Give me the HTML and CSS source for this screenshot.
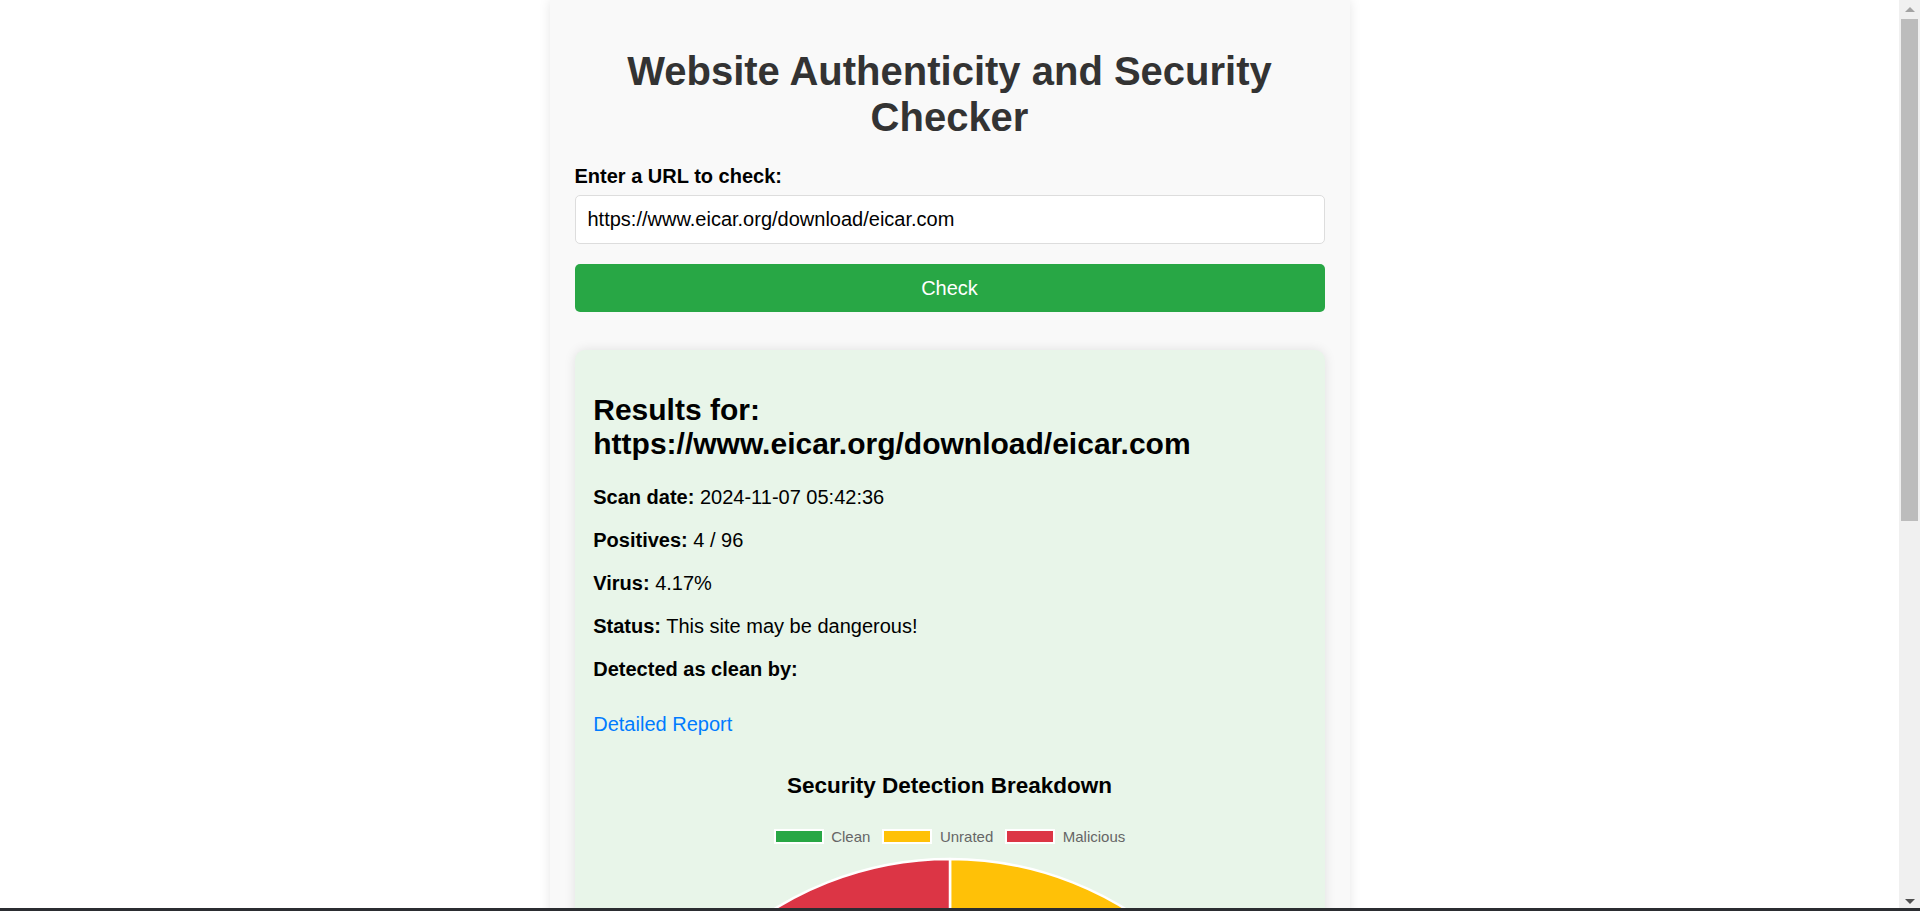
FILE: index.html
```html
<!DOCTYPE html>
<html lang="en">
<head>
<meta charset="utf-8">
<title>Website Authenticity and Security Checker</title>
<link rel="stylesheet" href="styles.css">
</head>
<body>
<div class="container">
  <h1 class="title">Website Authenticity and Security Checker</h1>
  <form class="check-form">
    <label class="field-label" for="url">Enter a URL to check:</label>
    <input class="url-input" id="url" type="text" value="https://www.eicar.org/download/eicar.com">
    <button class="check-btn" type="button">Check</button>
  </form>
  <div class="results">
    <h2 class="results-title">Results for: https://www.eicar.org/download/eicar.com</h2>
    <p class="row"><strong>Scan date:</strong> 2024-11-07 05:42:36</p>
    <p class="row"><strong>Positives:</strong> 4 / 96</p>
    <p class="row"><strong>Virus:</strong> 4.17%</p>
    <p class="row"><strong>Status:</strong> This site may be dangerous!</p>
    <p class="row"><strong>Detected as clean by:</strong></p>
    <p class="row report-row"><a class="report-link" href="#">Detailed Report</a></p>
    <div class="chart">
      <div class="chart-title">Security Detection Breakdown</div>
      <div class="legend">
        <div class="legend-item"><span class="swatch swatch-clean"></span><span class="legend-label">Clean</span></div>
        <div class="legend-item"><span class="swatch swatch-unrated"></span><span class="legend-label">Unrated</span></div>
        <div class="legend-item"><span class="swatch swatch-malicious"></span><span class="legend-label">Malicious</span></div>
      </div>
      <svg class="pie" width="712" height="680" viewBox="0 0 712 680">
        <path d="M356 335 L356 2 A333 333 0 0 1 356 668 Z" fill="#ffc107" stroke="#ffffff" stroke-width="2.5" stroke-linejoin="round"/>
        <path d="M356 335 L356 668 A333 333 0 0 1 356 2 Z" fill="#dc3545" stroke="#ffffff" stroke-width="2.5" stroke-linejoin="round"/>
      </svg>
    </div>
  </div>
</div>
<div class="scrollbar" aria-hidden="true">
  <div class="sb-btn"><span class="sb-arrow-up"></span></div>
  <div class="sb-track"><div class="sb-thumb"></div></div>
  <div class="sb-btn"><span class="sb-arrow-down"></span></div>
</div>
<div class="bottom-bar"></div>
</body>
</html>
```
FILE: styles.css
```css
html, body {
  margin: 0;
  padding: 0;
}

body {
  font-family: "Liberation Sans", Arial, sans-serif;
  background: #ffffff;
  color: #000000;
  padding-right: 21px;
}

.container {
  width: 750px;
  margin: 0 auto;
  padding: 25px 25px 25px;
  background: #f9f9f9;
  box-shadow: 0 0 12px rgba(0, 0, 0, 0.1);
  border-radius: 0 0 10px 10px;
}

.title {
  margin: 23px 0 25px;
  font-size: 40px;
  line-height: 46px;
  font-weight: bold;
  color: #333333;
  text-align: center;
}

.check-form {
  margin: 0;
}

.field-label {
  display: block;
  font-size: 20px;
  line-height: 23px;
  font-weight: bold;
  margin-bottom: 7px;
}

.url-input {
  display: block;
  box-sizing: border-box;
  width: 100%;
  height: 49px;
  margin: 0;
  padding: 0 12px;
  border: 1px solid #dddddd;
  border-radius: 5px;
  background: #ffffff;
  font-family: "Liberation Sans", Arial, sans-serif;
  font-size: 20px;
  color: #000000;
}

.check-btn {
  display: block;
  width: 100%;
  height: 48px;
  margin: 20px 0 0;
  padding: 0;
  border: none;
  border-radius: 5px;
  background: #28a745;
  color: #ffffff;
  font-family: "Liberation Sans", Arial, sans-serif;
  font-size: 20px;
}

.results {
  margin-top: 38px;
  padding: 18.75px;
  background: #e8f5e9;
  border-radius: 10px;
  box-shadow: 0 0 12px rgba(0, 0, 0, 0.1);
}

.results-title {
  margin: 24px 0 25px;
  font-size: 30px;
  line-height: 34px;
  font-weight: bold;
}

.row {
  margin: 20px 0;
  font-size: 20px;
  line-height: 23px;
}

.report-row {
  margin-top: 32px;
  margin-bottom: 0;
}

.report-link {
  color: #007bff;
  text-decoration: none;
}

.chart {
  margin-top: 37px;
  display: flex;
  flex-direction: column;
  align-items: center;
}

.chart-title {
  font-size: 22.5px;
  line-height: 26px;
  font-weight: bold;
  color: #000000;
}

.legend {
  display: flex;
  gap: 12px;
  margin-top: 29px;
  font-size: 15px;
  line-height: 17px;
  color: #666666;
}

.legend-item {
  display: flex;
  align-items: center;
  gap: 7.5px;
}

.swatch {
  display: block;
  box-sizing: border-box;
  width: 50px;
  height: 15px;
  border: 2px solid #ffffff;
}

.swatch-clean { background: #28a745; }
.swatch-unrated { background: #ffc107; }
.swatch-malicious { background: #dc3545; }

.pie {
  display: block;
  margin-top: 12.5px;
}

.scrollbar {
  position: fixed;
  top: 0;
  right: 0;
  bottom: 0;
  width: 21px;
  background: #f0f0f0;
  display: flex;
  flex-direction: column;
  z-index: 5;
}

.sb-btn {
  height: 19px;
  display: flex;
  align-items: center;
  justify-content: center;
  flex: none;
}

.sb-arrow-up {
  width: 0;
  height: 0;
  border-left: 5px solid transparent;
  border-right: 5px solid transparent;
  border-bottom: 5px solid #a3a3a3;
}

.sb-arrow-down {
  width: 0;
  height: 0;
  border-left: 5px solid transparent;
  border-right: 5px solid transparent;
  border-top: 5px solid #505050;
}

.sb-track {
  flex: 1;
  padding: 0 2px;
}

.sb-thumb {
  height: 502px;
  background: #bcbcbc;
}

.bottom-bar {
  position: fixed;
  left: 0;
  right: 0;
  bottom: 0;
  height: 3px;
  background: #2b2d31;
  z-index: 6;
}
```
